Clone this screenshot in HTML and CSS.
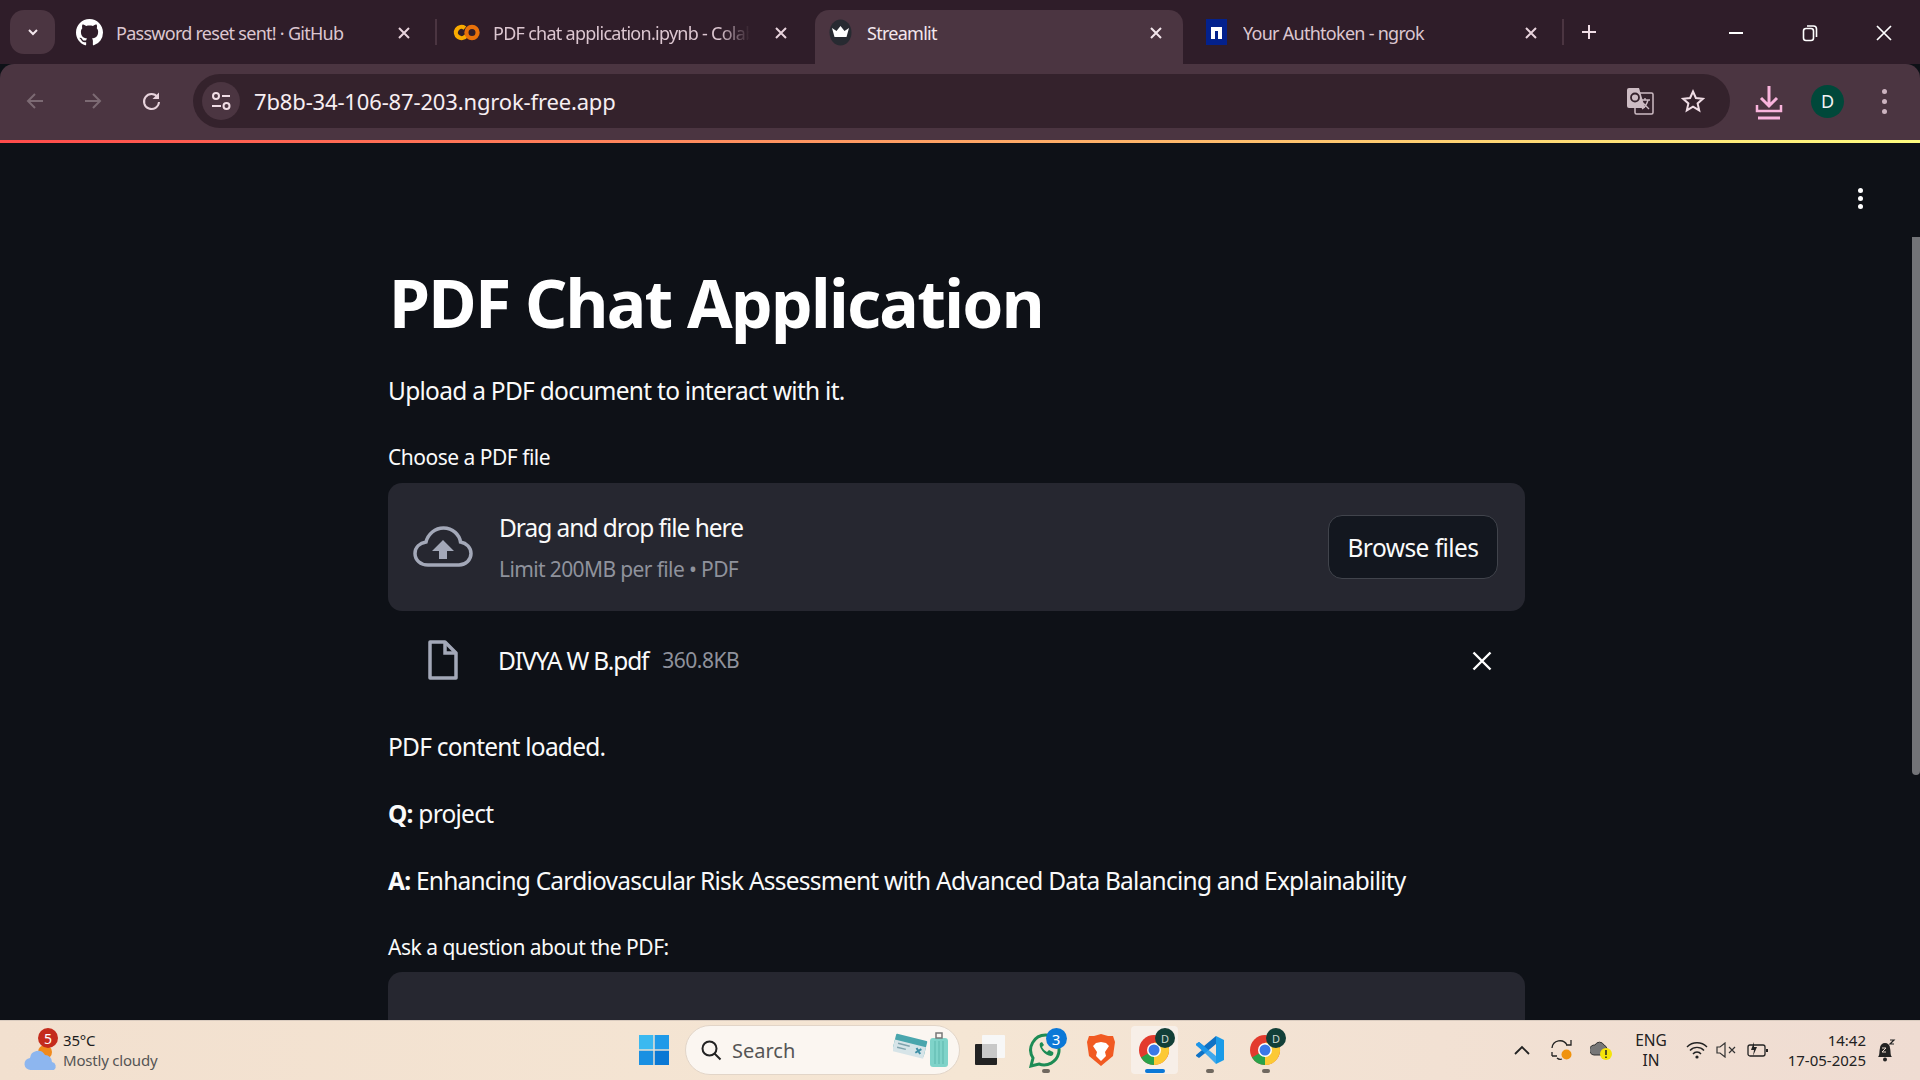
FILE: index.html
```html
<!DOCTYPE html>
<html lang="en">
<head>
<meta charset="utf-8">
<title>Streamlit</title>
<link rel="stylesheet" href="styles.css">
</head>
<body>
<div class="screen">
  <header class="tabstrip">
    <div class="tabsearch"><svg width="14" height="14" viewBox="0 0 14 14"><path d="M3 5l4 4 4-4" fill="none" stroke="#f3e6ec" stroke-width="2"/></svg></div>
    <div class="tab">
      <svg class="fav" width="27" height="27" viewBox="0 0 16 16"><path fill="#fff" d="M8 0C3.58 0 0 3.58 0 8c0 3.54 2.29 6.53 5.47 7.59.4.07.55-.17.55-.38 0-.19-.01-.82-.01-1.49-2.01.37-2.53-.49-2.69-.94-.09-.23-.48-.94-.82-1.13-.28-.15-.68-.52-.01-.53.63-.01 1.08.58 1.23.82.72 1.21 1.87.87 2.33.66.07-.52.28-.87.51-1.07-1.78-.2-3.64-.89-3.64-3.95 0-.87.31-1.59.82-2.15-.08-.2-.36-1.02.08-2.12 0 0 .67-.21 2.2.82.64-.18 1.32-.27 2-.27s1.36.09 2 .27c1.53-1.04 2.2-.82 2.2-.82.44 1.1.16 1.92.08 2.12.51.56.82 1.27.82 2.15 0 3.07-1.87 3.75-3.65 3.95.29.25.54.73.54 1.48 0 1.07-.01 1.93-.01 2.2 0 .21.15.46.55.38A8.01 8.01 0 0 0 16 8c0-4.42-3.58-8-8-8z"/></svg>
      <span class="tabtitle">Password reset sent! · GitHub</span>
      <svg class="tabx" width="14" height="14" viewBox="0 0 14 14"><path d="M2 2l10 10M12 2L2 12" stroke="#e8d3dc" stroke-width="2"/></svg>
    </div>
    <i class="tabsep"></i>
    <div class="tab">
      <svg class="fav" width="27" height="27" viewBox="0 0 27 27"><circle cx="8.500" cy="13.500" r="5.600" fill="none" stroke="#f9ab00" stroke-width="4.200" stroke-dasharray="26 10" transform="rotate(35 8.500 13.500)"/><circle cx="19" cy="13.500" r="5.600" fill="none" stroke="#e8710a" stroke-width="4.200"/></svg>
      <span class="tabtitle fade">PDF chat application.ipynb - Colab</span>
      <svg class="tabx" width="14" height="14" viewBox="0 0 14 14"><path d="M2 2l10 10M12 2L2 12" stroke="#e8d3dc" stroke-width="2"/></svg>
    </div>
    <div class="tab active">
      <svg class="fav" width="27" height="27" viewBox="0 0 27 27"><ellipse cx="13.500" cy="13.500" rx="11" ry="13" fill="#272a31"/><path d="M5 9l4.500 3L13.500 7l4 5L22 9l-2.500 9h-12z" fill="#fff"/></svg>
      <span class="tabtitle">Streamlit</span>
      <svg class="tabx" width="14" height="14" viewBox="0 0 14 14"><path d="M2 2l10 10M12 2L2 12" stroke="#f3e6ec" stroke-width="2"/></svg>
    </div>
    <div class="tab">
      <svg class="fav" width="27" height="27" viewBox="0 0 27 27"><rect x="3" width="21" height="26" fill="#03218c"/><path d="M8 20V8h11v12h-4v-8h-3v8z" fill="#fff"/></svg>
      <span class="tabtitle">Your Authtoken - ngrok</span>
      <svg class="tabx" width="14" height="14" viewBox="0 0 14 14"><path d="M2 2l10 10M12 2L2 12" stroke="#e8d3dc" stroke-width="2"/></svg>
    </div>
    <i class="tabsep"></i>
    <svg class="newtab" width="16" height="16" viewBox="0 0 16 16"><path d="M8 1v14M1 8h14" stroke="#f0dde5" stroke-width="2"/></svg>
    <div class="winctl">
      <svg width="16" height="16" viewBox="0 0 16 16"><path d="M1 8h14" stroke="#fff" stroke-width="2"/></svg>
      <svg width="16" height="18" viewBox="0 0 16 18"><rect x="1.500" y="4.500" width="10" height="12" rx="2.500" fill="none" stroke="#fff" stroke-width="1.600"/><path d="M5 2h6.500A3 3 0 0 1 14.500 5v8" fill="none" stroke="#fff" stroke-width="1.600"/></svg>
      <svg width="16" height="16" viewBox="0 0 16 16"><path d="M1 1l14 14M15 1L1 15" stroke="#fff" stroke-width="1.700"/></svg>
    </div>
  </header>

  <nav class="toolbar">
    <svg class="navbtn" width="20" height="20" viewBox="0 0 20 20"><path d="M18 10H3M10 3l-7 7 7 7" fill="none" stroke="#7c6a73" stroke-width="2"/></svg>
    <svg class="navbtn" width="20" height="20" viewBox="0 0 20 20"><path d="M2 10h15M10 3l7 7-7 7" fill="none" stroke="#7c6a73" stroke-width="2"/></svg>
    <svg class="navbtn" width="20" height="20" viewBox="0 0 20 20"><path d="M16.500 6A7.500 7.500 0 1 0 18 11" fill="none" stroke="#e8d3dc" stroke-width="2"/><path d="M18 1.500V8h-6.500z" fill="#e8d3dc"/></svg>
    <div class="omnibox">
      <span class="sitechip"><svg width="22" height="22" viewBox="0 0 22 22"><g fill="none" stroke="#f0dde5" stroke-width="2"><circle cx="6" cy="6" r="3"/><path d="M12 6h8M2 16h9"/><circle cx="16.500" cy="16" r="3"/></g></svg></span>
      <span class="url">7b8b-34-106-87-203.ngrok-free.app</span>
      <svg class="translate" width="28" height="28" viewBox="0 0 28 28"><rect x="9" y="6" width="18" height="21" rx="1.500" fill="none" stroke="#cdbcc4" stroke-width="1.500"/><path d="M1 3a2 2 0 0 1 2-2h10l6 20H3a2 2 0 0 1-2-2z" fill="#cdbcc4"/><circle cx="9" cy="10.500" r="4" fill="none" stroke="#34222c" stroke-width="1.800"/><path d="M15 13h9M19 11v2M22 13c-1 4-3 7-6 9M17 16l6 6" fill="none" stroke="#cdbcc4" stroke-width="1.400"/></svg>
      <svg class="star" width="24" height="24" viewBox="0 0 24 24"><path d="M12 2.500l2.900 6.500 7 .7-5.300 4.700 1.600 7L12 17.700l-6.200 3.700 1.600-7L2.100 9.700l7-.7z" fill="none" stroke="#f0dde5" stroke-width="2"/></svg>
    </div>
    <svg class="dl" width="28" height="36" viewBox="0 0 28 36"><path d="M14 1v20M6 13l8 8 8-8" fill="none" stroke="#f9b4dc" stroke-width="3"/><path d="M2 20v6h24v-6" fill="none" stroke="#f9b4dc" stroke-width="2.500"/><path d="M3 33h22" stroke="#f9b4dc" stroke-width="3"/></svg>
    <span class="avatar">D</span>
    <span class="kebab tool"><i></i><i></i><i></i></span>
  </nav>

  <div class="rainbow"></div>

  <main class="app">
    <span class="kebab page"><i></i><i></i><i></i></span>
    <div class="scrollthumb"></div>
    <section class="content">
      <h1>PDF Chat Application</h1>
      <p class="lead">Upload a PDF document to interact with it.</p>
      <label class="wlabel">Choose a PDF file</label>
      <div class="dropzone">
        <svg class="cloud" width="60" height="42" viewBox="0 0 60 42"><path d="M15 39C7.500 39 2 34 2 27.500S7 17 13 16C15 8 22 2 30.500 2 40 2 46.500 9 47.500 16 53.500 17 58 21.500 58 27.500S53 39 46 39z" fill="none" stroke="#a3a8b8" stroke-width="3.500"/><path d="M30 14l11 11h-7v8h-8v-8h-7z" fill="#a3a8b8"/></svg>
        <div class="dztext">
          <span class="dzmain">Drag and drop file here</span>
          <small class="dzsub">Limit 200MB per file • PDF</small>
        </div>
        <button class="browse">Browse files</button>
      </div>
      <div class="filerow">
        <svg class="fileicon" width="32" height="40" viewBox="0 0 32 40"><path d="M3 2h15l11 11v25H3z" fill="none" stroke="#a3a8b8" stroke-width="3.500" stroke-linejoin="round"/><path d="M18 2v11h11" fill="none" stroke="#a3a8b8" stroke-width="3.500"/></svg>
        <span class="fname">DIVYA W B.pdf</span>
        <small class="fsize">360.8KB</small>
        <svg class="fileclose" width="20" height="20" viewBox="0 0 20 20"><path d="M1.500 1.500l17 17M18.500 1.500l-17 17" stroke="#fff" stroke-width="2.400"/></svg>
      </div>
      <p class="line first">PDF content loaded.</p>
      <p class="line"><b>Q:</b> project</p>
      <p class="line"><b>A:</b> Enhancing Cardiovascular Risk Assessment with Advanced Data Balancing and Explainability</p>
      <label class="wlabel ask">Ask a question about the PDF:</label>
      <div class="inputbox"></div>
    </section>
  </main>

  <footer class="taskbar">
    <div class="weather">
      <svg class="wicon" width="34" height="38" viewBox="0 0 34 38"><circle cx="21" cy="17" r="7" fill="#f08a1d"/><path d="M7 35a6 6 0 0 1-1-12 8 8 0 0 1 15-3 7 7 0 0 1 7 7 4.500 4.500 0 0 1 2 8z" fill="#8db6ef"/></svg>
      <span class="wbadge">5</span>
      <div class="wtext"><span>35°C</span><small>Mostly cloudy</small></div>
    </div>
    <div class="taskcenter">
      <svg class="winlogo" width="30" height="30" viewBox="0 0 30 30"><rect width="14.300" height="14.300" fill="#3bb9f0"/><rect x="15.700" width="14.300" height="14.300" fill="#1f9ae8"/><rect y="15.700" width="14.300" height="14.300" fill="#1a90e2"/><rect x="15.700" y="15.700" width="14.300" height="14.300" fill="#0a78d4"/></svg>
      <div class="search">
        <svg width="22" height="22" viewBox="0 0 22 22"><circle cx="9.500" cy="9.500" r="7" fill="none" stroke="#222" stroke-width="2"/><path d="M14.500 14.500l6 6" stroke="#222" stroke-width="2"/></svg>
        <span>Search</span>
        <svg class="searchart" width="58" height="38" viewBox="0 0 58 38"><g transform="rotate(14 16 14)"><rect x="1" y="6" width="32" height="16" rx="1" fill="#4aa6ad"/><rect x="1" y="12" width="32" height="12" fill="#d6e4e8"/><path d="M24 15l5 5M29 15l-5 5" stroke="#3f8fa6" stroke-width="2"/><path d="M5 15h12M5 19h9" stroke="#7fa3ad" stroke-width="1.500"/></g><rect x="37" y="7" width="18" height="29" rx="3" fill="#7fd3c9"/><path d="M42 10v23M46 10v23M50 10v23" stroke="#5fb7ad"/><rect x="43" y="2" width="6" height="5" fill="none" stroke="#777" stroke-width="1.500"/></svg>
      </div>
      <span class="appslot lead-slot"><svg width="30" height="30" viewBox="0 0 30 30"><rect x="7" width="23" height="23" rx="1" fill="#f7f7f7"/><rect y="9" width="22" height="21" rx="1" fill="#222"/><rect x="7" y="9" width="15" height="14" fill="#c8c8c8"/></svg></span>
      <span class="appslot"><svg width="34" height="36" viewBox="0 0 34 36"><path d="M17 3A15 15 0 0 0 4 26L2 34l8-2A15 15 0 1 0 17 3z" fill="none" stroke="#1d8c55" stroke-width="3"/><path d="M11 11c-2 4 5 13 11 13 2 0 3-3 2-4l-4-2-2 2c-2-1-4-3-5-5l2-2-2-3z" fill="#1d8c55"/></svg><b class="count">3</b><i class="dot"></i></span>
      <span class="appslot tail-slot"><svg width="28" height="34" viewBox="0 0 28 34"><path d="M14 1l7 2 5 0 2 6-2 14-12 10L2 23 0 9l2-6 5 0z" fill="#f15a22"/><path d="M14 9l5 1 3 3-4 6 1 4-5 5-5-5 1-4-4-6 3-3z" fill="#fff"/></svg></span>
      <span class="appslot"><i class="chromeactive"></i><svg class="over" width="32" height="32" viewBox="0 0 32 32"><use href="#chrome"/></svg><b class="prof">D</b><i class="bar"></i></span>
      <span class="appslot"><svg width="30" height="30" viewBox="0 0 30 30"><path d="M21 1l8 4v20l-8 4z" fill="#1a9be8"/><path d="M21 1v8L9 19l-5 4-3-2v-1l6-5-6-5v-1l3-2 5 4z" fill="#0f72c5"/><path d="M21 29v-8L4 7 1 9v1l12 11 8 8z" fill="#1f9cf0" opacity=".85"/></svg><i class="dot"></i></span>
      <span class="appslot"><svg width="32" height="32" viewBox="0 0 32 32"><use href="#chrome"/></svg><b class="prof">D</b><i class="dot"></i></span>
    </div>
    <div class="tray">
      <svg width="18" height="10" viewBox="0 0 18 10"><path d="M2 9l7-7 7 7" fill="none" stroke="#222" stroke-width="1.800"/></svg>
      <svg width="22" height="22" viewBox="0 0 22 22"><path d="M1 9a8 8 0 0 1 15-3l4 0M20 1v5h-5M1 17h5M1 13v4M6 19a5 5 0 0 0 5 1" fill="none" stroke="#222" stroke-width="1.300"/><circle cx="15.500" cy="15.500" r="5" fill="#f0930e"/></svg>
      <svg width="24" height="22" viewBox="0 0 24 22"><path d="M4 16a5 5 0 0 1 1-10 5 5 0 0 1 9 0 5 5 0 0 1 3 4v6z" fill="#777" stroke="#333"/><circle cx="16" cy="15" r="6" fill="#f5e40a"/><path d="M16 11v5M16 17.500v1.500" stroke="#222" stroke-width="1.500"/></svg>
      <div class="lang"><span>ENG</span><span>IN</span></div>
      <svg width="22" height="18" viewBox="0 0 22 18"><path d="M1 6a14 14 0 0 1 20 0M4 9.500a9.500 9.500 0 0 1 14 0M7 13a5 5 0 0 1 8 0" fill="none" stroke="#222" stroke-width="1.400"/><circle cx="11" cy="16" r="1.600" fill="#222"/></svg>
      <svg width="22" height="16" viewBox="0 0 22 16"><path d="M1 5h3l5-4v14l-5-4H1z" fill="none" stroke="#333" stroke-width="1.200"/><path d="M13 5l6 6M19 5l-6 6" stroke="#333" stroke-width="1.200"/></svg>
      <svg width="22" height="18" viewBox="0 0 22 18"><rect x="1" y="4" width="17" height="11" rx="2" fill="none" stroke="#222" stroke-width="1.300"/><path d="M20 8v3" stroke="#222" stroke-width="2"/><path d="M7 1l-3 8h3l-1 6 4-9H7z" fill="#222"/></svg>
      <div class="clock"><span>14:42</span><span>17-05-2025</span></div>
      <svg width="20" height="24" viewBox="0 0 20 24"><path d="M2 19c2-2 1-5 2-9a5 5 0 0 1 10 0c1 4 0 7 2 9z" fill="#222"/><circle cx="9" cy="21.500" r="2" fill="#222"/><path d="M6 10h4l-4 4h4" fill="none" stroke="#e8d8cc" stroke-width="1"/><path d="M14 2h4l-4 4h4" fill="none" stroke="#222" stroke-width="1.200"/></svg>
    </div>
  </footer>
</div>
<svg class="defs" width="0" height="0"><defs><g id="chrome"><circle cx="16" cy="16" r="15" fill="#e33b2e"/><path d="M16 16L3 23.500A15 15 0 0 0 16 31z" fill="#2aa24a"/><path d="M16 16l0 15A15 15 0 0 0 29 8.500H16z" fill="#fcc934"/><circle cx="16" cy="16" r="7" fill="#fff"/><circle cx="16" cy="16" r="5.500" fill="#3b78e7"/></g></defs></svg>
</body>
</html>
```
FILE: styles.css
```css
* { box-sizing: border-box; }
html, body { margin: 0; height: 100%; overflow: hidden; }
body { font-family: "Noto Sans", sans-serif; background: #0e1117; }
.defs { position: absolute; }
.screen { width: 1920px; height: 1080px; display: flex; flex-direction: column; overflow: hidden; }

.tabstrip { height: 64px; flex: none; background: #2f1d29; display: flex; align-items: flex-start; padding: 10px 0 0 10px; position: relative; }
.tabsearch { width: 45px; height: 44px; border-radius: 14px; background: #4b3541; display: flex; align-items: center; justify-content: center; margin-right: 5px; }
.tab { width: 375px; height: 45px; display: flex; align-items: center; padding: 0 24px 0 16px; border-radius: 14px 14px 0 0; flex: none; }
.tab.active { background: #4b3541; height: 55px; padding: 0 20px 10px 12px; width: 368px; margin: 0 4px 0 3px; }
.fav { flex: none; margin-right: 13px; }
.tabtitle { flex: 1; font-size: 18px; letter-spacing: -.73px; color: #dcc6d0; white-space: nowrap; overflow: hidden; }
.tab.active .tabtitle { color: #f3e6ec; }
.fade { flex: none; width: 257px; margin-right: 24px; -webkit-mask-image: linear-gradient(90deg, #000 88%, transparent 100%); mask-image: linear-gradient(90deg, #000 88%, transparent 100%); }
.tabx { flex: none; }
.tabsep { width: 2px; height: 26px; background: #4b3541; margin-top: 9px; flex: none; }
.newtab { margin: 14px 0 0 17px; flex: none; }
.winctl { position: absolute; right: 28px; top: 24px; width: 164px; display: flex; justify-content: space-between; align-items: center; }

.toolbar { height: 76px; flex: none; background: #4b3541; display: flex; align-items: center; padding: 0 0 2px 25px; border-radius: 14px 14px 0 0; }
.navbtn { flex: none; margin-right: 38px; }
.navbtn:nth-child(3) { margin-right: 32px; }
.omnibox { width: 1537px; height: 54px; border-radius: 27px; background: #34222c; display: flex; align-items: center; padding: 0 25px 0 9px; margin-right: 25px; flex: none; }
.sitechip { width: 38px; height: 38px; border-radius: 50%; background: #4b3541; display: flex; align-items: center; justify-content: center; flex: none; margin-right: 14px; }
.url { flex: 1; font-size: 22px; letter-spacing: -.15px; color: #f7eef2; }
.translate { margin-right: 27px; }
.dl { flex: none; margin: 4px 28px 0 0; }
.avatar { width: 33px; height: 33px; border-radius: 50%; background: #00483a; color: #f3f3f3; font-size: 18px; display: flex; align-items: center; justify-content: center; flex: none; margin-right: 38px; }
.kebab { display: flex; flex-direction: column; gap: 3px; flex: none; }
.kebab i { width: 5px; height: 5px; border-radius: 50%; }
.kebab.tool { gap: 5px; }
.kebab.tool i { background: #cdb4c0; }
.kebab.page { position: absolute; right: 57px; top: 45px; }
.kebab.page i { background: #fff; }

.rainbow { height: 3px; flex: none; background: linear-gradient(90deg, #ff4b4b, #fffd80); }

.app { flex: 1; min-height: 0; background: #0e1117; position: relative; overflow: hidden; }
.scrollthumb { position: absolute; right: 0; top: 94px; width: 8px; height: 538px; background: #737478; border-radius: 0 0 4px 4px; }
.content { width: 1137px; margin-left: 388px; color: #fafafa; }
h1 { margin: 0; padding: 121px 0 0 1px; font-size: 66px; line-height: 76px; font-weight: 700; letter-spacing: -1.7px; color: #fff; }
.lead { margin: 35px 0 0; font-size: 24.500px; line-height: 32px; letter-spacing: -.73px; }
.wlabel { display: block; font-size: 21px; line-height: 28px; letter-spacing: -.5px; margin-top: 36px; }
.dropzone { margin-top: 12px; height: 128px; border-radius: 14px; background: #262730; display: flex; align-items: center; padding: 0 27px 0 25px; }
.cloud { flex: none; margin-right: 26px; }
.dztext { flex: 1; display: flex; flex-direction: column; gap: 8px; }
.dzmain { font-size: 24.500px; line-height: 36px; letter-spacing: -1.03px; }
.dzsub { font-size: 21px; line-height: 30px; letter-spacing: -.62px; color: #8f929c; }
.browse { width: 170px; height: 64px; background: #13171f; color: #fafafa; border: 1px solid #41444c; border-radius: 14px; font: 24.500px "Noto Sans", sans-serif; letter-spacing: -.55px; }
.filerow { height: 76px; margin-top: 11px; display: flex; align-items: center; padding-left: 39px; }
.fileicon { flex: none; margin-right: 39px; }
.fname { font-size: 24.500px; letter-spacing: -1.15px; }
.fsize { font-size: 21px; letter-spacing: -.5px; color: #8f929c; margin-left: 14px; }
.fileclose { margin: 2px 33px 0 auto; }
.line { margin: 31px 0 0; font-size: 24.500px; line-height: 36px; letter-spacing: -.77px; }
.line.first { margin-top: 31px; }
.line b { font-weight: 700; }
.wlabel.ask { margin-top: 34px; }
.inputbox { margin-top: 11px; height: 120px; background: #262730; border-radius: 14px; }

.taskbar { height: 60px; flex: none; background: linear-gradient(90deg, #f2e0cf, #f5e6d4 50%, #efdcd2); border-top: 1px solid #d9cbbf; display: flex; align-items: center; position: relative; }
.weather { position: absolute; left: 24px; top: 4px; display: flex; align-items: center; width: 160px; height: 50px; }
.wicon { flex: none; margin-top: 8px; }
.wbadge { position: absolute; left: 14px; top: 3px; width: 20px; height: 20px; border-radius: 50%; background: #c42b1c; color: #fff; font-size: 14px; display: flex; align-items: center; justify-content: center; }
.wtext { display: flex; flex-direction: column; margin-left: 5px; font-size: 15px; line-height: 20px; letter-spacing: -.2px; color: #1c1c1c; }
.wtext small { font-size: 15px; color: #555; }
.taskcenter { position: absolute; left: 639px; top: 5px; display: flex; align-items: center; height: 48px; }
.winlogo { flex: none; margin-right: 16px; }
.search { width: 275px; height: 50px; border-radius: 25px; background: #fbf6f1; border: 1px solid #e2d5c8; display: flex; align-items: center; padding: 0 8px 0 14px; flex: none; }
.search span { flex: 1; margin-left: 10px; font-size: 20px; color: #555; }
.searchart { flex: none; }
.appslot { position: relative; width: 55.500px; height: 48px; display: flex; align-items: center; justify-content: center; flex: none; }
.lead-slot { margin-left: 2.500px; }
.tail-slot { margin-right: -2.500px; }
.over { position: relative; }
.chromeactive { position: absolute; left: 4px; width: 47px; top: 0; height: 48px; background: #f7efe8; border-radius: 4px; }
.count { position: absolute; right: 7px; top: 2px; width: 21px; height: 21px; border-radius: 50%; background: #0b78d7; color: #fff; font-size: 15px; font-weight: 400; display: flex; align-items: center; justify-content: center; }
.prof { position: absolute; right: 7px; top: 2px; width: 20px; height: 20px; border-radius: 50%; background: #123f38; color: #cfd8d0; font-size: 11px; font-weight: 400; display: flex; align-items: center; justify-content: center; }
.dot { position: absolute; bottom: 1px; left: 24px; width: 8px; height: 4px; border-radius: 2px; background: #70685f; }
.bar { position: absolute; bottom: 1px; left: 18px; width: 20px; height: 4px; border-radius: 2px; background: #0b78d7; }
.tray { position: absolute; left: 1502px; top: 0; height: 58px; display: grid; grid-template-columns: 40px 40px 40px 58px 34px 26px 36px 90px 40px; align-items: center; justify-items: center; }
.lang { display: flex; flex-direction: column; align-items: center; font-size: 15.500px; line-height: 20px; color: #222; }
.clock { justify-self: end; display: flex; flex-direction: column; align-items: flex-end; font-size: 15px; line-height: 20px; color: #222; }
```
